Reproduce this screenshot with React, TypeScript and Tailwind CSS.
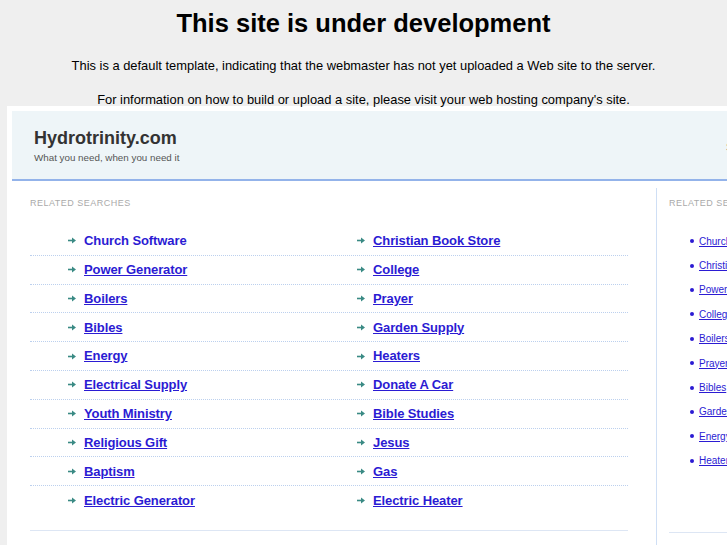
import React from 'react'

const mainLinks: [string, string][] = [
  ['Church Software', 'Christian Book Store'],
  ['Power Generator', 'College'],
  ['Boilers', 'Prayer'],
  ['Bibles', 'Garden Supply'],
  ['Energy', 'Heaters'],
  ['Electrical Supply', 'Donate A Car'],
  ['Youth Ministry', 'Bible Studies'],
  ['Religious Gift', 'Jesus'],
  ['Baptism', 'Gas'],
  ['Electric Generator', 'Electric Heater'],
]

const sideLinks = [
  'Church Software',
  'Christian Book Store',
  'Power Generator',
  'College',
  'Boilers',
  'Prayer',
  'Bibles',
  'Garden Supply',
  'Energy',
  'Heaters',
]

function Arrow() {
  return (
    <svg width="8" height="7" viewBox="0 0 8 7" className="shrink-0">
      <path d="M0 3.5H5" stroke="#3a8a84" strokeWidth="1.6" />
      <path d="M4 0.5L8 3.5L4 6.5Z" fill="#3a8a84" />
    </svg>
  )
}

function LinkCell({ label, first }: { label: string; first?: boolean }) {
  return (
    <div className="flex items-center gap-[8px]">
      <Arrow />
      <a
        href="#"
        className={`text-[13px] font-bold text-[#2b1bd3] tracking-[-0.1px] ${first ? 'no-underline' : 'underline'}`}
      >
        {label}
      </a>
    </div>
  )
}

export default function App() {
  return (
    <div
      className="w-full h-[545px] overflow-hidden bg-[#efefef]"
      style={{ fontFamily: '"Liberation Sans", Arial, sans-serif' }}
    >
      <div className="text-center text-black">
        <h1 className="pt-[8px] text-[25.5px] leading-[30px] font-bold">This site is under development</h1>
        <p className="mt-[20px] text-[12.9px] leading-[16px]">
          This is a default template, indicating that the webmaster has not yet uploaded a Web site to the server.
        </p>
        <p className="mt-[18px] text-[12.9px] leading-[16px]">
          For information on how to build or upload a site, please visit your web hosting company's site.
        </p>
      </div>

      <div className="mt-[-2px] ml-[7px] w-[1000px] bg-white pl-[5px] pt-[5px]">
        <div className="flex h-[70px] bg-[#eef5f8] border-b-2 border-[#93b3ea]">
          <div className="w-[714px] shrink-0 pl-[22px] pt-[16px]">
            <div className="text-[18px] leading-[22px] font-bold text-[#333]">Hydrotrinity.com</div>
            <div className="mt-[3px] text-[9.8px] leading-[12px] text-[#555]">What you need, when you need it</div>
          </div>
          <div className="pt-[28px] text-[11px] text-[#555]">Search</div>
        </div>

        <div className="flex pt-[7px]">
          <div className="w-[644px] shrink-0 pl-[18px] pr-[28px]">
            <div className="pt-[10px] text-[9px] leading-[11px] tracking-[0.5px] text-[#aaa] uppercase">
              Related Searches
            </div>
            <div className="mt-[18px]">
              {mainLinks.map(([a, b], i) => (
                <div
                  key={a}
                  className={`flex h-[28.8px] items-center ${
                    i < mainLinks.length - 1 ? 'border-b border-dotted border-[#bcd0ee]' : ''
                  }`}
                >
                  <div className="w-[289px] shrink-0 pl-[38px]">
                    <LinkCell label={a} first={i === 0} />
                  </div>
                  <div className="pl-[38px]">
                    <LinkCell label={b} />
                  </div>
                </div>
              ))}
            </div>
            <div className="mt-[15px] border-b border-[#dde6f4]" />
          </div>

          <div className="flex-1 border-l border-[#cfdff5] pl-[12px] h-[400px]">
            <div className="pt-[10px] text-[9px] leading-[11px] tracking-[0.5px] text-[#aaa] uppercase">
              Related Searches
            </div>
            <ul className="mt-[20px] pl-[21px]">
              {sideLinks.map((s) => (
                <li key={s} className="flex h-[24.4px] items-center gap-[5px]">
                  <span className="h-[4px] w-[4px] rounded-full bg-[#2b1bd3] shrink-0" />
                  <a href="#" className="text-[10px] text-[#2b1bd3] underline whitespace-nowrap">
                    {s}
                  </a>
                </li>
              ))}
            </ul>
            <div className="mt-[59px] border-b border-[#dde6f4]" />
          </div>
        </div>
      </div>
    </div>
  )
}
